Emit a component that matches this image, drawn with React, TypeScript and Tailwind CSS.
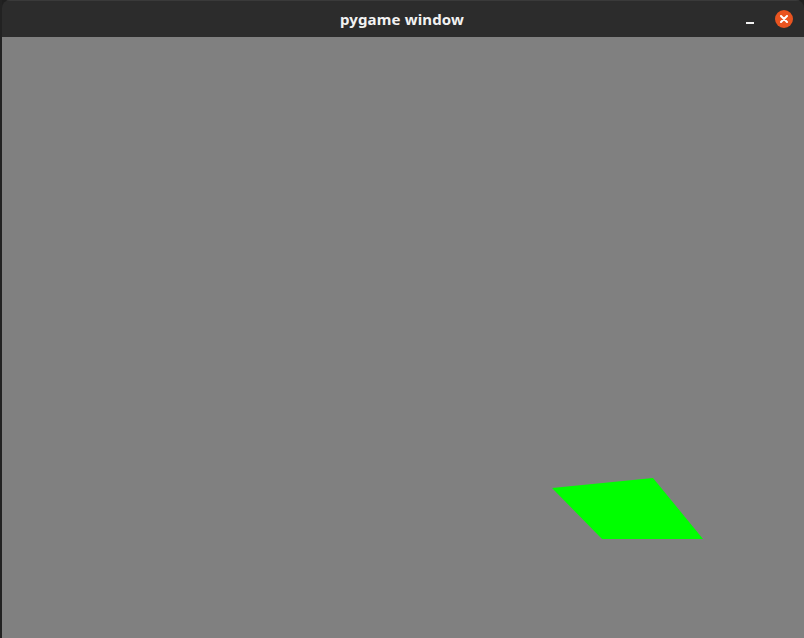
const FONT = { fontFamily: '"Noto Sans", "Open Sans", sans-serif' };

function CloseButton() {
	return (
		<button
			type="button"
			aria-label="Close window"
			className="flex h-[18px] w-[18px] items-center justify-center rounded-full bg-[#e95420]"
		>
			<svg width="8" height="8" viewBox="0 0 8 8" aria-hidden="true">
				<path d="M1 1L7 7M7 1L1 7" stroke="#ffffff" strokeWidth="2" strokeLinecap="round" />
			</svg>
		</button>
	);
}

export default function App() {
	return (
		<div className="flex h-[638px] w-[804px] bg-[#1f1f1f]">
			<div className="w-[2px] shrink-0 bg-[#222222]" aria-hidden="true" />
			<div className="flex flex-1 flex-col overflow-hidden rounded-t-[8px]">
				<header className="relative flex h-[37px] shrink-0 items-center justify-center border-t border-[#3a3a3a] bg-[#2c2c2c]">
					<p
						className="-ml-[2px] text-[15px] font-bold tracking-[0.01em] text-[#f2f2f2]"
						style={FONT}
					>
						pygame window
					</p>
					<div className="absolute right-[11px] top-0 flex h-full items-center gap-[20px]">
						<button type="button" aria-label="Minimize window" className="flex h-[18px] w-[10px] items-end justify-center pb-[4px]">
							<span className="block h-[2px] w-[8px] bg-[#f2f2f2]" />
						</button>
						<CloseButton />
					</div>
				</header>
				<main className="relative flex-1 bg-[#808080]">
					<svg className="absolute inset-0 h-full w-full" viewBox="0 0 802 601" aria-hidden="true">
						<polygon points="550,451 651,441 701,502 600,502" fill="#00ff00" />
					</svg>
				</main>
			</div>
		</div>
	);
}
